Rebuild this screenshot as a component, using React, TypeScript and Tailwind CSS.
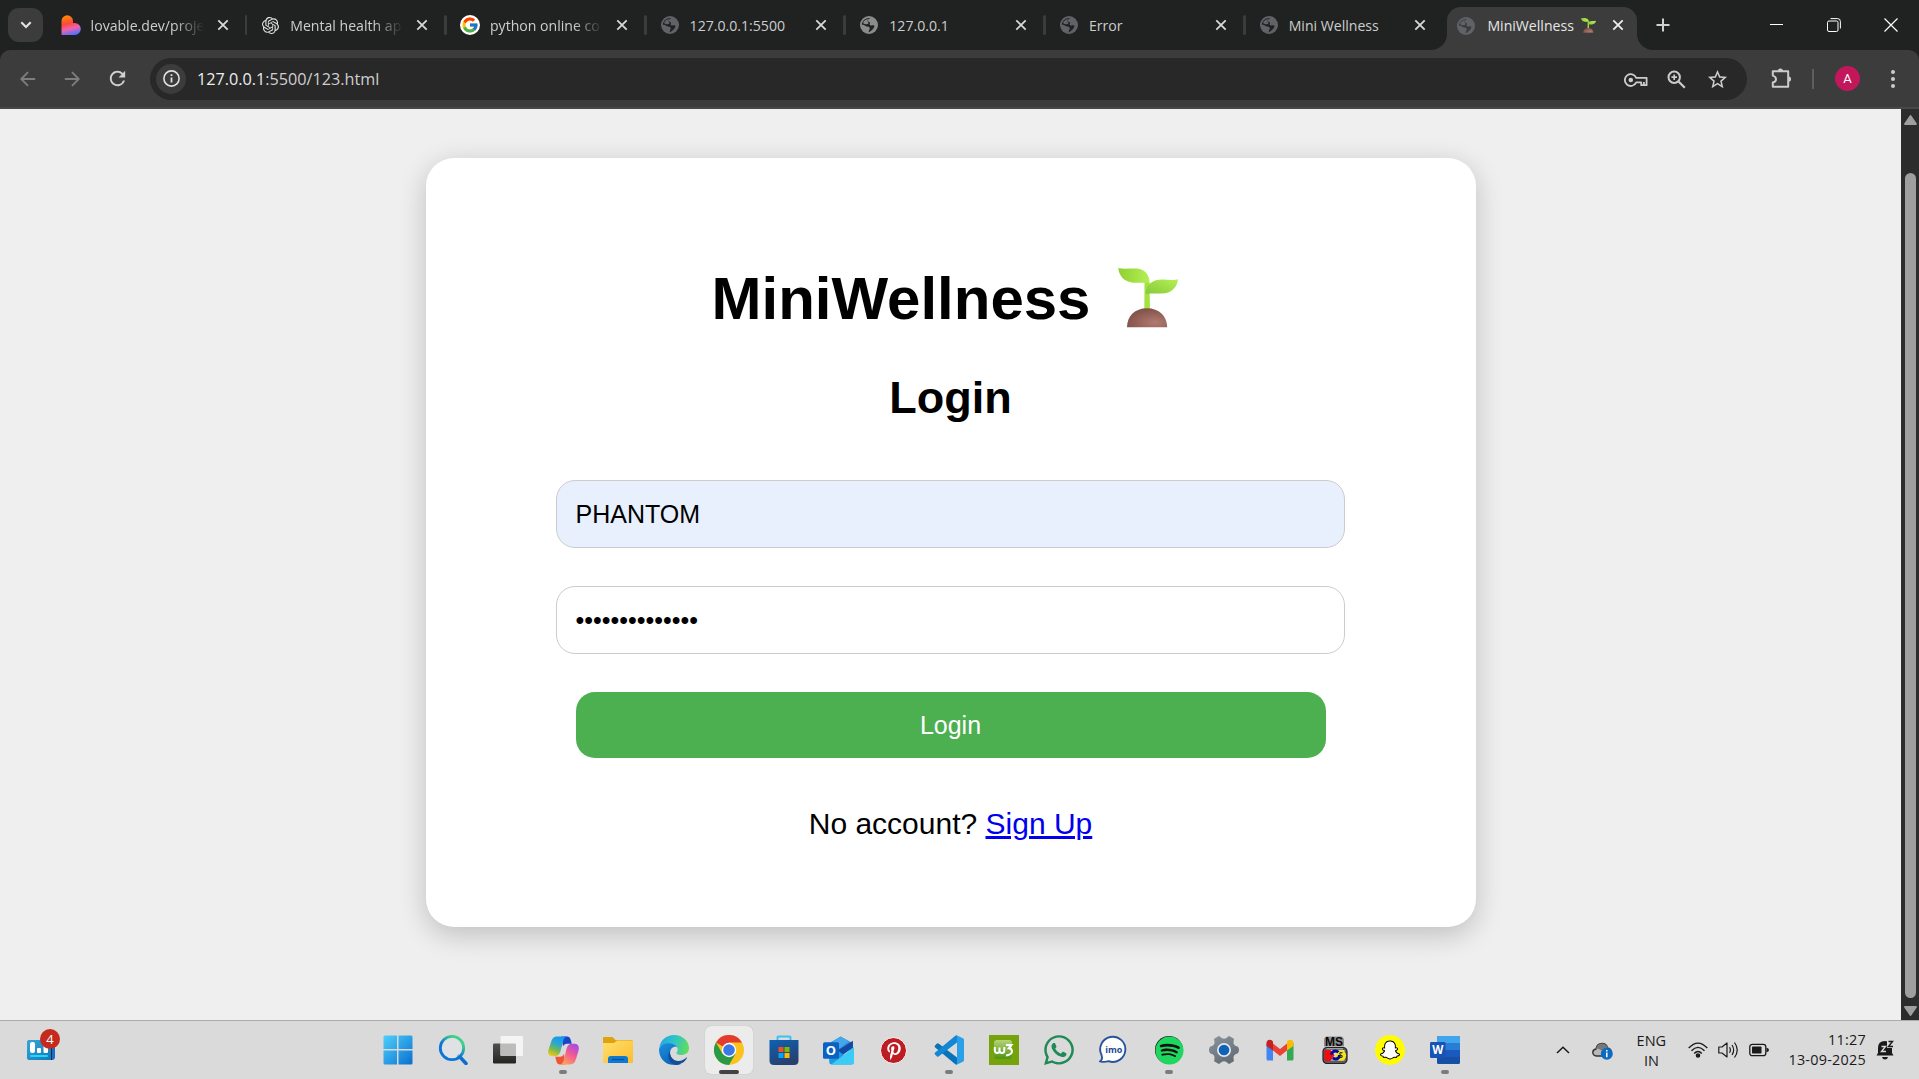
import React from "react";
import { SiOpenai } from "react-icons/si";
import { FcGoogle } from "react-icons/fc";
import { FaPinterestP, FaWhatsapp, FaSpotify, FaSnapchatGhost } from "react-icons/fa";
import { MdStarOutline, MdRefresh } from "react-icons/md";

const Sprout = ({ id, className }: { id: string; className: string }) => (
  <svg viewBox="0 0 60 60" className={className}>
    <defs>
      <linearGradient id={id + "l"} x1="0" x2="1">
        <stop offset="0" stopColor="#8fd032" />
        <stop offset="1" stopColor="#b5f053" />
      </linearGradient>
      <linearGradient id={id + "r"} x1="0" x2="1" y1="1" y2="0">
        <stop offset="0" stopColor="#86c93a" />
        <stop offset="1" stopColor="#b5f053" />
      </linearGradient>
      <radialGradient id={id + "s"} cx=".7" cy=".75" r=".8">
        <stop offset="0" stopColor="#b07a72" />
        <stop offset="1" stopColor="#7f4f45" />
      </radialGradient>
    </defs>
    <path d="M26.500 14 L31.500 14 L32 44 L26.300 44 Z" fill="#a3e243" />
    <path d="M.3 0 C6 1.500 12 0 19 .6 C27 1.500 31.500 7 31.600 14.700 L15 14.700 C6 13.500 1 8 .3 0 Z" fill={`url(#${id}l)`} />
    <path d="M27.500 26 C27.500 15.500 36 11.300 45 11.600 C50 11.800 55 12.600 60 11.200 C59 20 53 25 44 25.600 L34 25.600 C31 25.600 29 25.800 27.500 26 Z" fill={`url(#${id}r)`} />
    <path d="M9 59.300 C9 48 17 40.300 29 40.300 C41 40.300 49 48 49.200 59.300 Z" fill={`url(#${id}s)`} />
  </svg>
);

const Globe = ({ color, bg }: { color: string; bg: string }) => (
  <svg viewBox="0 0 18 18" className="size-[18px]">
    <circle cx="9" cy="9" r="9" fill={color} />
    <path d="M10.500 2 C9 2.500 7.500 3.500 8 5 C8.500 6.200 10 5.800 10 7 C10 8 9 8.500 10.200 9.300 C11.500 10 13 8.800 14 9.600 C14.800 10.300 14.300 11.500 13.500 12.300 C12.300 13.800 10.600 15.500 9 16.200 C8 15 10.500 13 9.500 11.500 C8.500 10.300 6 10.800 4.800 9.500 C4 8.500 3 8.600 1.900 8.800 C2 5 5.500 1.600 10.500 2 Z" fill={bg} fillRule="evenodd" />
    <path d="M3 7 C4 4.500 5.800 3.300 8 3 C7 5 8 6.500 8.800 7 C7.500 8.500 5 8.800 3 7 Z" fill={color} />
  </svg>
);

const Lovable = () => (
  <svg viewBox="0 0 20 20" className="size-5">
    <defs>
      <linearGradient id="lov" x1=".3" y1="0" x2=".55" y2="1">
        <stop offset="0" stopColor="#ff8a00" />
        <stop offset=".4" stopColor="#fb4a3a" />
        <stop offset=".68" stopColor="#ef62b0" />
        <stop offset="1" stopColor="#4b73ff" />
      </linearGradient>
    </defs>
    <path d="M.5 6 A5.700 5.700 0 0 1 12 6 L12 8 L13.800 8 A5.900 5.900 0 0 1 13.800 20 L.5 20 Z" fill="url(#lov)" />
  </svg>
);

const CloseX = ({ color = "#d8d8d8" }: { color?: string }) => (
  <svg viewBox="0 0 12 12" className="size-3 shrink-0">
    <path d="M1.300 1.300 L10.700 10.700 M10.700 1.300 L1.300 10.700" stroke={color} strokeWidth="1.800" />
  </svg>
);

const tabs = [
  { title: "lovable.dev/proje", icon: <Lovable />, fade: true },
  { title: "Mental health ap", icon: <SiOpenai className="size-[17px] text-[#e4e4e4]" />, fade: true },
  {
    title: "python online co",
    icon: (
      <span className="flex size-5 items-center justify-center rounded-full bg-white">
        <FcGoogle className="size-[18px]" />
      </span>
    ),
    fade: true,
  },
  { title: "127.0.0.1:5500", icon: <Globe color="#5f6368" bg="#202221" /> },
  { title: "127.0.0.1", icon: <Globe color="#8b8b8b" bg="#202221" /> },
  { title: "Error", icon: <Globe color="#5f6368" bg="#202221" /> },
  { title: "Mini Wellness", icon: <Globe color="#5f6368" bg="#202221" />, last: true },
];

function TabStrip() {
  return (
    <div className="flex h-[50px] shrink-0 bg-[#202221]">
      <div className="mt-2 ml-2 flex h-[34px] w-[35px] items-center justify-center rounded-[11px] bg-[#3c3c3c]">
        <svg viewBox="0 0 12 8" className="h-2 w-3">
          <path d="M1.300 1.300 L6 6 L10.700 1.300" fill="none" stroke="#e3e3e3" strokeWidth="2.100" />
        </svg>
      </div>
      <div className="ml-[4.600px] flex">
        {tabs.map((t) => (
          <div key={t.title} className="flex h-[50px] w-[199.700px] items-center pl-[13px]">
            <span className="flex w-5 justify-center">{t.icon}</span>
            <span
              className={
                "mt-px ml-2.5 w-[113px] text-[14.100px] leading-6 whitespace-nowrap text-[#cdcdcd] " +
                (t.fade ? "[mask-image:linear-gradient(to_right,black_74%,transparent_100%)]" : "")
              }
            >
              {t.title}
            </span>
            <span className="ml-[13px] flex">
              <CloseX />
            </span>
            <span className={"ml-[16px] h-5 w-[3px] rounded-full " + (t.last ? "bg-transparent" : "bg-[#3c3c3c]")} />
          </div>
        ))}
      </div>
      <div className="flex items-end">
        <svg viewBox="0 0 16 16" className="-ml-[14px] size-4">
          <path d="M0 16 A16 16 0 0 0 16 0 V16 Z" fill="#3c3c3c" />
        </svg>
        <div className="flex h-[43px] w-[190px] items-center rounded-t-[14px] bg-[#3c3c3c] pb-[7px] pl-[10px]">
          <span className="mt-0.5">
            <Globe color="#5f6368" bg="#3c3c3c" />
          </span>
          <span className="mt-px ml-[12px] text-[14.100px] leading-6 text-[#e6e6e6]">MiniWellness</span>
          <Sprout id="tab" className="mt-px ml-[7px] size-[15px]" />
          <span className="ml-auto flex pr-[13px]">
            <CloseX color="#eeeeee" />
          </span>
        </div>
        <svg viewBox="0 0 16 16" className="size-4">
          <path d="M16 16 A16 16 0 0 1 0 0 V16 Z" fill="#3c3c3c" />
        </svg>
      </div>
      <div className="flex h-[50px] flex-1 items-center">
        <svg viewBox="0 0 14 14" className="ml-[3px] size-[14px]">
          <path d="M7 .5 V13.500 M.5 7 H13.500" stroke="#d0d0d0" strokeWidth="2" />
        </svg>
        <div className="ml-auto flex items-center gap-[43px] pr-[21px]">
          <svg viewBox="0 0 14 14" className="size-[14px]">
            <path d="M0 6.500 H13" stroke="#fff" />
          </svg>
          <svg viewBox="0 0 14 14" className="size-[14px]" fill="none" stroke="#fff">
            <rect x=".5" y="3" width="10.500" height="10.500" rx="1.500" />
            <path d="M3.500 .6 H10.500 Q13.400 .6 13.400 3.500 V10.500" />
          </svg>
          <svg viewBox="0 0 14 14" className="size-[14px]">
            <path d="M.5 .5 L13.500 13.500 M13.500 .5 L.5 13.500" stroke="#fff" strokeWidth="1.200" />
          </svg>
        </div>
      </div>
    </div>
  );
}

const KeyIcon = () => (
  <svg viewBox="0 0 24 14" className="h-[14px] w-6" fill="none" stroke="#cccccc" strokeWidth="1.800">
    <path d="M12.200 4.800 H22.600 V12.200 H17.200 V9.300 H12.200 A5.900 5.900 0 1 1 12.200 4.800 Z" strokeLinejoin="round" />
    <circle cx="6.800" cy="7" r="2.300" fill="#cccccc" stroke="none" />
    <path d="M19.900 9 V12" />
  </svg>
);

const ZoomIcon = () => (
  <svg viewBox="0 0 19 19" className="size-[19px]" fill="none" stroke="#cccccc" strokeWidth="2">
    <circle cx="7.200" cy="7.200" r="5.700" />
    <path d="M11.500 11.500 L17.800 17.800" strokeWidth="2.200" />
    <path d="M7.200 4.400 V10 M4.400 7.200 H10" strokeWidth="1.700" />
  </svg>
);

const PuzzleIcon = () => (
  <svg viewBox="0 0 21 21" className="size-[21px]" fill="none" stroke="#cccccc" strokeWidth="2" strokeLinejoin="round">
    <path d="M1.800 3.300 H17.200 V18.800 H1.800 V14.500 Q5 13.800 5 11.200 Q5 8.500 1.800 7.600 Z" />
    <path d="M6.800 3 A2.600 2.600 0 0 1 12 3 Z M17.500 8.500 A2.600 2.600 0 0 1 17.500 13.700 Z" fill="#cccccc" stroke="none" />
  </svg>
);

function Toolbar() {
  return (
    <div className="bg-[#202221]">
      <div className="flex h-[59px] items-center rounded-t-[10px] border-b-2 border-[#484848] bg-[#3c3c3c]">
        <svg viewBox="0 0 16 16" className="ml-[20px] size-4" fill="none" stroke="#7d7d7d" strokeWidth="1.900">
          <path d="M15.200 8 H1.500 M8 1.200 L1.300 8 L8 14.800" />
        </svg>
        <svg viewBox="0 0 16 16" className="ml-[28px] size-4" fill="none" stroke="#7d7d7d" strokeWidth="1.900">
          <path d="M.8 8 H14.500 M8 1.200 L14.700 8 L8 14.800" />
        </svg>
        <MdRefresh className="ml-[26px] size-[23px] text-[#d0d0d0]" />
        <div className="ml-[21px] flex h-[42px] w-[1597px] items-center rounded-full bg-[#282828] pl-1.5">
          <span className="flex size-[30px] items-center justify-center rounded-full bg-[#3c3c3c]">
            <svg viewBox="0 0 17 17" className="size-[17px]" fill="none" stroke="#e0e0e0" strokeWidth="1.600">
              <circle cx="8.500" cy="8.500" r="7.600" />
              <path d="M8.500 7.500 V12.500 M8.500 4.300 V6" strokeWidth="1.800" />
            </svg>
          </span>
          <span className="mt-px ml-[11px] text-[16.200px] leading-6 text-[#cfcfcf]">
            <span className="text-[#eeeeee]">127.0.0.1</span>:5500/123.html
          </span>
          <div className="ml-auto flex items-center pr-[18px] text-[#cccccc]">
            <span className="mt-[3px] mr-[19px]">
              <KeyIcon />
            </span>
            <span className="mt-[2px] mr-[20px]">
              <ZoomIcon />
            </span>
            <MdStarOutline className="mt-px size-[23px]" />
          </div>
        </div>
        <span className="ml-[24px]">
          <PuzzleIcon />
        </span>
        <span className="ml-[20px] h-5 w-[2px] bg-[#5e5e5e]" />
        <span className="ml-[21px] flex size-[25px] items-center justify-center rounded-full bg-[#c2185b] font-['Roboto'] text-[13px] text-white">
          A
        </span>
        <svg viewBox="0 0 4 18" className="ml-[31px] h-[18px] w-1" fill="#cccccc">
          <circle cx="2" cy="2" r="2" />
          <circle cx="2" cy="9" r="2" />
          <circle cx="2" cy="16" r="2" />
        </svg>
      </div>
    </div>
  );
}

function LoginCard() {
  return (
    <form className="flex h-[769px] w-[1050px] flex-col items-center rounded-[28px] bg-white pt-[105px] shadow-[0_7.5px_28px_rgba(0,0,0,0.2)]">
      <h1 className="flex h-[70px] justify-center text-[60px] leading-[72px] font-bold">
        <span className="w-[379px] pl-px">MiniWellness</span>
        <Sprout id="hero" className="mt-[5px] mr-[13px] ml-[28px] size-[60px]" />
      </h1>
      <h2 className="mt-[39px] text-[45px] leading-[52px] font-bold">Login</h2>
      <input
        type="text"
        defaultValue="PHANTOM"
        spellCheck={false}
        className="mt-[56px] h-[68px] w-[789px] rounded-[19px] border border-[#cccccc] bg-[#e8f0fe] px-[18.500px] text-[25px]"
      />
      <input
        type="password"
        defaultValue="12345678901234"
        className="mt-[38px] h-[68px] w-[789px] rounded-[19px] border border-[#cccccc] bg-white px-[18.500px] text-[25px]"
      />
      <button type="button" className="mt-[38px] h-[66px] w-[750px] rounded-[19px] bg-[#4caf50] pt-0.5 text-[25px] text-white">
        Login
      </button>
      <p className="mt-[49px] text-[30px] leading-[34px]">
        No account? <a className="text-[#0000ee] underline">Sign Up</a>
      </p>
    </form>
  );
}

const StartIcon = () => (
  <svg viewBox="0 0 30 30" className="size-[30px]">
    <defs>
      <linearGradient id="win" x2="1" y2="1">
        <stop offset="0" stopColor="#4fd0fb" />
        <stop offset="1" stopColor="#0a6fd0" />
      </linearGradient>
    </defs>
    <path d="M2 .5 H14 V14 H.5 V2 Q.5 .5 2 .5 Z M15.500 .5 H28 Q29.500 .5 29.500 2 V14 H15.500 Z M.5 15.500 H14 V29.500 H2 Q.5 29.500 .5 28 Z M15.500 15.500 H29.500 V28 Q29.500 29.500 28 29.500 H15.500 Z" fill="url(#win)" />
  </svg>
);
const SearchIcon = () => (
  <svg viewBox="0 0 30 30" className="size-[30px]" fill="none">
    <defs>
      <linearGradient id="sea" x1=".2" y1="1" x2=".9" y2="0">
        <stop offset=".4" stopColor="#0a75d6" />
        <stop offset=".8" stopColor="#3fd08c" />
      </linearGradient>
    </defs>
    <path d="M21 21 L28 28.500" stroke="#0a6fd0" strokeWidth="3.500" strokeLinecap="round" />
    <circle cx="14" cy="13" r="11.700" stroke="url(#sea)" strokeWidth="2.800" fill="#e3e9ee" fillOpacity=".5" />
  </svg>
);
const TaskViewIcon = () => (
  <svg viewBox="0 0 30 30" className="size-[30px]">
    <defs>
      <linearGradient id="tv" y2="1" x2="0">
        <stop offset="0" stopColor="#51504e" />
        <stop offset="1" stopColor="#242422" />
      </linearGradient>
    </defs>
    <rect x="0" y="8.500" width="23" height="20" rx="1.200" fill="url(#tv)" />
    <rect x="7.500" y="1" width="22.500" height="20" rx="1.200" fill="#f4f4f4" />
    <path d="M7.500 8.500 H22 Q23 8.500 23 9.500 V21 H8.500 Q7.500 21 7.500 20 Z" fill="#bcbcbb" />
  </svg>
);
const CopilotIcon = () => (
  <svg viewBox="0 0 30 30" className="size-[31px]">
    <defs>
      <linearGradient id="cpa" x1=".6" y1="0" x2=".2" y2="1">
        <stop offset="0" stopColor="#1499ee" />
        <stop offset=".35" stopColor="#2ca7d0" />
        <stop offset=".65" stopColor="#74b854" />
        <stop offset="1" stopColor="#f4cb15" />
      </linearGradient>
      <linearGradient id="cpb" x1=".8" y1="0" x2=".2" y2="1">
        <stop offset="0" stopColor="#a14be8" />
        <stop offset=".45" stopColor="#ef5896" />
        <stop offset="1" stopColor="#fda45a" />
      </linearGradient>
    </defs>
    <path d="M13 1.500 H19 Q21 1.500 21.800 4 L23 8.500 H18 Q15.500 8.500 14.500 11 Z" fill="#1b44c8" />
    <path d="M17 28.500 H11 Q9 28.500 8.200 26 L7 21 H12 Q14.500 21 15.500 18.500 Z" fill="#ee5538" />
    <path d="M8.500 1.500 H17.500 Q15.500 2.500 14.800 5.500 L12 16 Q10.500 20.500 7 20.500 H4 Q-.8 20 .4 14.500 L3 6.500 Q4.500 1.500 8.500 1.500 Z" fill="url(#cpa)" />
    <path d="M21.500 28.500 H12.500 Q14.500 27.500 15.200 24.500 L18 13 Q19.500 8.500 23 8.500 H26 Q30.800 9 29.600 15 L27 23.500 Q25.500 28.500 21.500 28.500 Z" fill="url(#cpb)" />
  </svg>
);
const FolderIcon = () => (
  <svg viewBox="0 0 30 30" className="size-[30px]">
    <defs>
      <linearGradient id="fol" x2="1" y2="1">
        <stop offset="0" stopColor="#ffdf70" />
        <stop offset="1" stopColor="#fdbd2c" />
      </linearGradient>
    </defs>
    <path d="M0 3 Q0 2 1 2 H9.500 L12.500 5 H29 Q30 5 30 6 V12 H0 Z" fill="#e0a20c" />
    <path d="M0 8 H11 L14 5.500 H30 V27 Q30 28 29 28 H1 Q0 28 0 27 Z" fill="url(#fol)" />
    <path d="M5 28 V24 Q5 21 8 21 H22 Q25 21 25 24 V28 Z" fill="#0f78cf" />
    <path d="M9 24.500 H21" stroke="#0a4e97" strokeWidth="1.200" />
  </svg>
);
const EdgeIcon = () => (
  <svg viewBox="0 0 30 30" className="size-[30px]">
    <defs>
      <linearGradient id="eda" x1="0" y1=".3" x2="1" y2=".5">
        <stop offset="0" stopColor="#25a5e4" />
        <stop offset=".5" stopColor="#2fc5c6" />
        <stop offset="1" stopColor="#62dc5b" />
      </linearGradient>
      <linearGradient id="edb" y2="1" x2=".6">
        <stop offset="0" stopColor="#1b90dd" />
        <stop offset="1" stopColor="#0b64bd" />
      </linearGradient>
    </defs>
    <path d="M.2 13 C1.500 5 7.500 0 15 0 C24 0 30 6.500 30 13 C30 18 26 20 22.500 20 C18.500 20 17 18.600 17.500 17.500 C20 15 18.500 10 13 9 C7 8 2 10 .2 13 Z" fill="url(#eda)" />
    <path d="M0 14.500 C1 10 6 7.500 12 8.500 C15 9 17.500 11 18 12 C14 11 11 14 11 18 C11 23 16 27.500 22 29 C19 30.300 15 30 13 29.800 C5 29 0 22 0 14.500 Z" fill="url(#edb)" />
    <path d="M11.200 15.500 C10 22 15 26.500 20 26 C24 25.500 26 23.600 27.500 22.500 C28 22.300 28.200 22.600 28 23 C25.500 27.500 21 29.800 17 29.800 C10 29 7 21 11.200 15.500 Z" fill="#124f95" />
  </svg>
);
const ChromeIcon = () => (
  <svg viewBox="0 0 30 30" className="size-[30px]">
    <circle cx="15" cy="15" r="15" fill="#fcc31e" />
    <path d="M15 15 L2 7.500 A15 15 0 0 1 28 7.500 H15 Z" fill="#e33b2e" />
    <path d="M2 7.500 A15 15 0 0 0 15 30 L21.500 18.700 L15 15 L8.500 18.700 Z" fill="#2a9a47" />
    <circle cx="15" cy="15" r="7.200" fill="#fff" />
    <circle cx="15" cy="15" r="5.800" fill="#3b78e7" />
  </svg>
);
const StoreIcon = () => (
  <svg viewBox="0 0 30 30" className="size-[30px]">
    <defs>
      <linearGradient id="sto" y2="1" x2=".4">
        <stop offset="0" stopColor="#0d62b4" />
        <stop offset="1" stopColor="#27406f" />
      </linearGradient>
    </defs>
    <path d="M8.500 6 V2.500 Q8.500 1.500 9.500 1.500 H20.500 Q21.500 1.500 21.500 2.500 V6" fill="none" stroke="#3fc0f3" strokeWidth="2" />
    <path d="M.5 5 H29.500 V25.500 Q29.500 30 25 30 H5 Q.5 30 .5 25.500 Z" fill="url(#sto)" />
    <rect x="9.500" y="12" width="5" height="5" fill="#f25022" />
    <rect x="15.500" y="12" width="5" height="5" fill="#7fba00" />
    <rect x="9.500" y="18" width="5" height="5" fill="#00a4ef" />
    <rect x="15.500" y="18" width="5" height="5" fill="#ffb900" />
  </svg>
);
const OutlookIcon = () => (
  <svg viewBox="0 0 30 30" className="size-[31px]">
    <path d="M6 8 L17 1.500 L29 8 V15 H6 Z" fill="#2f8fdd" />
    <path d="M8 7 L17 1.500 L25 6 L12 16 Z" fill="#47a6e8" />
    <path d="M14 15 L29 5.500 V12 L18 20 Z" fill="#1349a3" />
    <path d="M6 15 L12 13 L30 27 Q29 28.500 27 28.500 H8 Q6 28.500 6 26 Z" fill="#1a9ce4" />
    <path d="M30 11.500 V26 Q30 28.500 27 28.500 H8 Z" fill="#3ccbf4" />
    <rect x="0" y="7" width="15.500" height="16" rx="1.500" fill="#0c62c4" />
    <text x="7.700" y="19.300" textAnchor="middle" fontFamily="Open Sans, sans-serif" fontSize="12.500" fontWeight="700" fill="#fff">O</text>
  </svg>
);
const PinterestIcon = () => (
  <span className="flex size-[27px] items-center justify-center rounded-full border-[1.500px] border-white bg-[#bd1c23] text-white">
    <FaPinterestP className="mt-0.5 size-[18px]" />
  </span>
);
const CodeIcon = () => (
  <svg viewBox="0 0 30 30" className="size-[30px]">
    <path d="M1 10.500 L3 8.500 Q3.700 8 4.500 8.600 L23 22.500 V29.500 Q22 30 21 29 L.9 12.200 Q.3 11.300 1 10.500 Z" fill="#0873b8" />
    <path d="M1 19.500 L3 21.500 Q3.700 22 4.500 21.400 L23 7.500 V.5 Q22 0 21 1 L.9 17.800 Q.3 18.700 1 19.500 Z" fill="#1487d2" />
    <path d="M22 0 L29 3.200 Q30 3.700 30 5 V25 Q30 26.300 29 26.800 L22 30 Q23 28.800 23 27 V3 Q23 1 22 0 Z" fill="#2ba0ea" />
  </svg>
);
const W3Icon = () => (
  <svg viewBox="0 0 30 30" className="size-[30px]">
    <defs>
      <linearGradient id="w3g" x2="0" y2="1">
        <stop offset="0" stopColor="#b4d478" />
        <stop offset="1" stopColor="#4f9410" />
      </linearGradient>
    </defs>
    <rect width="30" height="30" fill="#76a30c" />
    <rect x="5" y="5" width="18" height="19" rx="3" fill="url(#w3g)" />
    <path d="M5.800 12 V15.500 Q6 18 8.200 18 Q10.500 18 10.500 15.500 V12.500 V15.500 Q10.700 18 13 18 Q15.300 18 15.300 15.500 V12" fill="none" stroke="#fff" strokeWidth="2" />
    <path d="M17 10 H22.500 L19.800 13.300 Q23 13.500 23 16.500 Q22.800 19.500 17 20.500" fill="none" stroke="#fff" strokeWidth="2" />
  </svg>
);
const ImoIcon = () => (
  <svg viewBox="0 0 30 30" className="size-[30px]">
    <path d="M2.500 20 A12.600 12.600 0 1 1 9.500 26.200 Q5 27.500 1.300 26.300 Q4 24.500 2.500 20 Z" fill="#fff" stroke="#2a549a" strokeWidth="1.900" />
    <text x="14.800" y="17.900" textAnchor="middle" fontFamily="Open Sans, sans-serif" fontSize="9" fontWeight="700" fill="#1d4a94">imo</text>
  </svg>
);
const SpotifyIcon = () => (
  <span className="flex size-[28px] items-center justify-center rounded-full bg-[#111]">
    <FaSpotify className="size-[29px] shrink-0 text-[#1ed75f]" />
  </span>
);
const GearIcon = () => (
  <svg viewBox="0 0 30 30" className="size-[30px]">
    <defs>
      <linearGradient id="gea" y2="1" x2=".5">
        <stop offset="0" stopColor="#8a949c" />
        <stop offset="1" stopColor="#656e77" />
      </linearGradient>
    </defs>
    <path d="M9 1.500 Q10.500 .5 11 1.800 Q15 5.500 19 1.800 Q19.500 .5 21 1.500 L24.500 3.500 Q25.300 4.300 24.700 5.300 Q23.500 10.500 28.500 11.500 Q30 12 30 15 Q30 18 28.500 18.500 Q23.500 19.500 24.700 24.700 Q25.300 25.700 24.500 26.500 L21 28.500 Q19.500 29.500 19 28.200 Q15 24.500 11 28.200 Q10.500 29.500 9 28.500 L5.500 26.500 Q4.700 25.700 5.300 24.700 Q6.500 19.500 1.500 18.500 Q0 18 0 15 Q0 12 1.500 11.500 Q6.500 10.500 5.300 5.300 Q4.700 4.300 5.500 3.500 Z" fill="url(#gea)" />
    <circle cx="15" cy="15" r="7" fill="#e4e8eb" />
    <circle cx="15" cy="15" r="5.300" fill="#0d63b8" />
  </svg>
);
const GmailIcon = () => (
  <svg viewBox="0 0 28 22" className="h-[22px] w-7">
    <path d="M.5 4 L7 8 V21.500 H2 Q.5 21.500 .5 20 Z" fill="#4285f4" />
    <path d="M27.500 4 L21 8 V21.500 H26 Q27.500 21.500 27.500 20 Z" fill="#34a853" />
    <path d="M7 4.500 L14 10 L21 4.500 V11.500 L14 17 L7 11.500 Z" fill="#ea4335" />
    <path d="M.5 4 C.5 .8 4 -.3 6.300 1.700 L7 2.500 V11.500 L.5 7 Z" fill="#c5221f" />
    <path d="M27.500 4 C27.500 .8 24 -.3 21.700 1.700 L21 2.500 V11.500 L27.500 7 Z" fill="#fbbc04" />
  </svg>
);
const DosIcon = () => (
  <svg viewBox="0 0 26 28" className="h-7 w-[26px]">
    <path d="M4 .5 H20 L22 3 V10.500 H2 V2.500 Z" fill="#8e8e8e" />
    <text x="12" y="9.800" textAnchor="middle" fontFamily="Liberation Sans, sans-serif" fontSize="12" fontWeight="700" fill="#080808">MS</text>
    <rect x="1" y="11.500" width="24" height="16" rx="4" fill="#5c5c5c" stroke="#222" strokeWidth="1.200" />
    <path d="M4.500 12.800 H21" stroke="#bdbdbd" />
    <rect x="3" y="14" width="19.500" height="10.500" fill="#d8d8d8" />
    <path d="M2.500 14 H8.500 L12.500 19.300 L8.500 25 H2.500 Z" fill="#f00d12" />
    <circle cx="18.800" cy="19.500" r="5.300" fill="#f5e618" />
    <circle cx="13.500" cy="19" r="4" fill="none" stroke="#07089d" strokeWidth="3" strokeDasharray="9 3.500" />
    <path d="M20.500 17 Q17.500 16 17.800 18 Q18 19.200 20 19.800 Q21 21.500 17.500 21.800" fill="none" stroke="#222" strokeWidth="1.100" />
  </svg>
);
const SnapIcon = () => (
  <span className="flex size-[30px] items-center justify-center rounded-full bg-[#fffc00]">
    <FaSnapchatGhost className="size-[18px] overflow-visible fill-white stroke-black [stroke-width:56px] [paint-order:stroke]" />
  </span>
);
const WordIcon = () => (
  <svg viewBox="0 0 30 30" className="size-[30px]">
    <rect x="7" y="1" width="23" height="28" rx="1.500" fill="#174ea6" />
    <path d="M7 8 V2.500 Q7 1 8.500 1 H28.500 Q30 1 30 2.500 V8 Z" fill="#41a5ee" />
    <rect x="7" y="8" width="23" height="7" fill="#2b7cd3" />
    <rect x="7" y="15" width="23" height="7" fill="#185abd" />
    <rect x="0" y="7" width="15.500" height="16" rx="1.200" fill="#1753b4" />
    <text x="7.700" y="19" textAnchor="middle" fontFamily="Open Sans, sans-serif" fontSize="11.500" fontWeight="700" fill="#fff">W</text>
  </svg>
);

const apps: { name: string; icon: React.ReactNode; open?: boolean; active?: boolean }[] = [
  { name: "start", icon: <StartIcon /> },
  { name: "search", icon: <SearchIcon /> },
  { name: "taskview", icon: <TaskViewIcon /> },
  { name: "copilot", icon: <CopilotIcon />, open: true },
  { name: "files", icon: <FolderIcon /> },
  { name: "edge", icon: <EdgeIcon /> },
  { name: "chrome", icon: <ChromeIcon />, active: true },
  { name: "store", icon: <StoreIcon /> },
  { name: "outlook", icon: <OutlookIcon /> },
  { name: "pinterest", icon: <PinterestIcon /> },
  { name: "code", icon: <CodeIcon />, open: true },
  { name: "w3", icon: <W3Icon /> },
  { name: "whatsapp", icon: <FaWhatsapp className="size-[34px] text-[#1f8a55]" /> },
  { name: "imo", icon: <ImoIcon /> },
  { name: "spotify", icon: <SpotifyIcon />, open: true },
  { name: "settings", icon: <GearIcon /> },
  { name: "gmail", icon: <GmailIcon /> },
  { name: "dos", icon: <DosIcon /> },
  { name: "snapchat", icon: <SnapIcon /> },
  { name: "word", icon: <WordIcon />, open: true },
];

function Taskbar() {
  return (
    <div className="flex h-[59px] shrink-0 items-start border-t border-[#ababab] bg-[#dadada]">
      <div className="relative mt-[19px] ml-[27px] h-5 w-7">
        <svg viewBox="0 0 28 20" className="h-5 w-7">
          <defs>
            <linearGradient id="wid" x2="1" y2="1">
              <stop offset="0" stopColor="#35a5d6" />
              <stop offset="1" stopColor="#1579bd" />
            </linearGradient>
          </defs>
          <rect width="28" height="20" rx="3" fill="#1a6fc4" />
          <path d="M3 0 H24 V20 H3 Q0 20 0 17 V3 Q0 0 3 0 Z" fill="url(#wid)" />
          <path d="M24.500 8 V20" stroke="#082b50" />
          <rect x="3" y="2" width="5" height="11" rx="2" fill="#fff" />
          <rect x="10" y="8" width="4" height="5" rx="1" fill="#fff" />
          <rect x="16.500" y="5" width="4.500" height="8" rx="1" fill="#fff" />
          <rect x="3" y="15" width="18" height="2" rx="1" fill="#1fd8f2" />
        </svg>
        <span className="absolute -top-[11px] left-[13px] flex size-5 items-center justify-center rounded-full bg-[#c42b1c] text-[13px] leading-none text-white">
          4
        </span>
      </div>
      <div className="ml-[315.500px] flex">
        {apps.map((a) => (
          <div key={a.name} className="flex w-[55.100px] justify-center pt-[5px]">
            <div
              className={
                "relative flex size-12 shrink-0 items-center justify-center rounded-[6px] " +
                (a.active ? "bg-[#ececec] shadow-[0_0_1px_#aaa]" : "")
              }
            >
              {a.icon}
              {a.open && <span className="absolute bottom-0 h-1 w-2 rounded-full bg-[#7c7c7c]" />}
              {a.active && <span className="absolute bottom-0 h-1 w-5 rounded-full bg-[#434343]" />}
            </div>
          </div>
        ))}
      </div>
      <div className="flex h-[58px] flex-1 items-center text-[#1a1a1a]">
        <svg viewBox="0 0 14 8" className="ml-[84px] h-2 w-[14px]">
          <path d="M1 7 L7 1.200 L13 7" fill="none" stroke="#1a1a1a" strokeWidth="1.500" />
        </svg>
        <svg viewBox="0 0 21 18" className="mt-0.5 ml-[22px] h-[18px] w-[21px]">
          <path d="M4.500 14 Q.8 13.500 .8 10.500 Q.8 7.500 4 7 Q5 1.500 10 1.500 Q14.500 1.500 15.500 6 Q19 6.500 19 10 Q19 14 15 14 Z" fill="#b8b8b8" stroke="#333" strokeWidth="1.400" />
          <path d="M4 7 Q7 6 9.500 8.500 L16 6.500 Q14.500 1.500 10 1.500 Q5 1.500 4 7 Z" fill="#777" />
          <circle cx="14.800" cy="11.800" r="6" fill="#0b6bc0" />
          <path d="M14.800 10.500 V15.300 M14.800 8 V9.500" stroke="#fff" strokeWidth="1.500" />
        </svg>
        <div className="ml-[22px] flex w-[32px] flex-col items-center pt-px text-[14.500px] leading-[20px]">
          <div>ENG</div>
          <div>IN</div>
        </div>
        <svg viewBox="0 0 20 16" className="ml-[21px] h-4 w-5" fill="none" stroke="#1a1a1a" strokeWidth="1.400">
          <path d="M.7 6 Q10 -3.800 19.300 6 M3.500 8.800 Q10 2 16.500 8.800 M6.200 11.500 Q10 7.500 13.800 11.500" />
          <circle cx="10" cy="13.500" r="1.600" fill="#1a1a1a" />
        </svg>
        <svg viewBox="0 0 21 18" className="ml-[10px] h-[18px] w-[21px]" fill="none" stroke="#1a1a1a" strokeWidth="1.200">
          <path d="M.8 6 H4 L9 2 V16 L4 12 H.8 Z" strokeLinejoin="round" />
          <path d="M11.500 6.200 Q13.300 9 11.500 11.800 M14 4 Q17.300 9 14 14 M16.500 1.500 Q22 9 16.500 16.500" />
        </svg>
        <svg viewBox="0 0 20 14" className="ml-[10px] h-[14px] w-5">
          <rect x=".8" y="1.300" width="16" height="11.400" rx="2.500" fill="none" stroke="#1a1a1a" strokeWidth="1.300" />
          <rect x="3" y="3.500" width="9.500" height="7" rx=".8" fill="#1a1a1a" />
          <path d="M17.500 4.800 Q20 5 20 7 Q20 9 17.500 9.200 Z" fill="#1a1a1a" />
        </svg>
        <div className="ml-auto text-right text-[14.400px] leading-[20px] tracking-[0.25px]">
          <div>11:27</div>
          <div>13-09-2025</div>
        </div>
        <svg viewBox="0 0 18 20" className="mr-[25px] ml-[10px] h-5 w-[18px]">
          <path d="M2 8 Q2 1 9 1 Q16 1 16 8 V13 L17.500 15.500 H.5 L2 13 Z M6 17 H12 Q11.500 19.500 9 19.500 Q6.500 19.500 6 17 Z" fill="#1a1a1a" />
          <path d="M5.500 6.500 H9.500 L5.500 11.500 H10" fill="none" stroke="#dadada" strokeWidth="1.400" />
          <path d="M11 .5 H17 V8 H11 Z" fill="#dadada" />
          <path d="M12.500 1.500 H16.500 L12.500 6.500 H17" fill="none" stroke="#1a1a1a" strokeWidth="1.400" />
        </svg>
      </div>
    </div>
  );
}

export default function App() {
  return (
    <div className="flex h-[1079px] w-[1919px] flex-col overflow-hidden bg-[#efefef] font-['Open_Sans',sans-serif]">
      <TabStrip />
      <Toolbar />
      <div className="flex flex-1">
        <main className="flex flex-1 justify-center pt-[49px] font-['Liberation_Sans',sans-serif] text-black">
          <LoginCard />
        </main>
        <div className="flex w-[18px] flex-col items-center bg-[#2c2c2c] pt-[6px] pb-1">
          <svg viewBox="0 0 13 10" className="h-[10px] w-[13px]">
            <path d="M6.500 1 L12 9 H1 Z" fill="#9f9f9f" stroke="#9f9f9f" strokeWidth="1.800" strokeLinejoin="round" />
          </svg>
          <div className="mt-[48px] h-[825px] w-[11px] rounded-full bg-[#9f9f9f]" />
          <svg viewBox="0 0 13 10" className="mt-auto h-[10px] w-[13px]">
            <path d="M6.500 9 L12 1 H1 Z" fill="#9f9f9f" stroke="#9f9f9f" strokeWidth="1.800" strokeLinejoin="round" />
          </svg>
        </div>
      </div>
      <Taskbar />
    </div>
  );
}
